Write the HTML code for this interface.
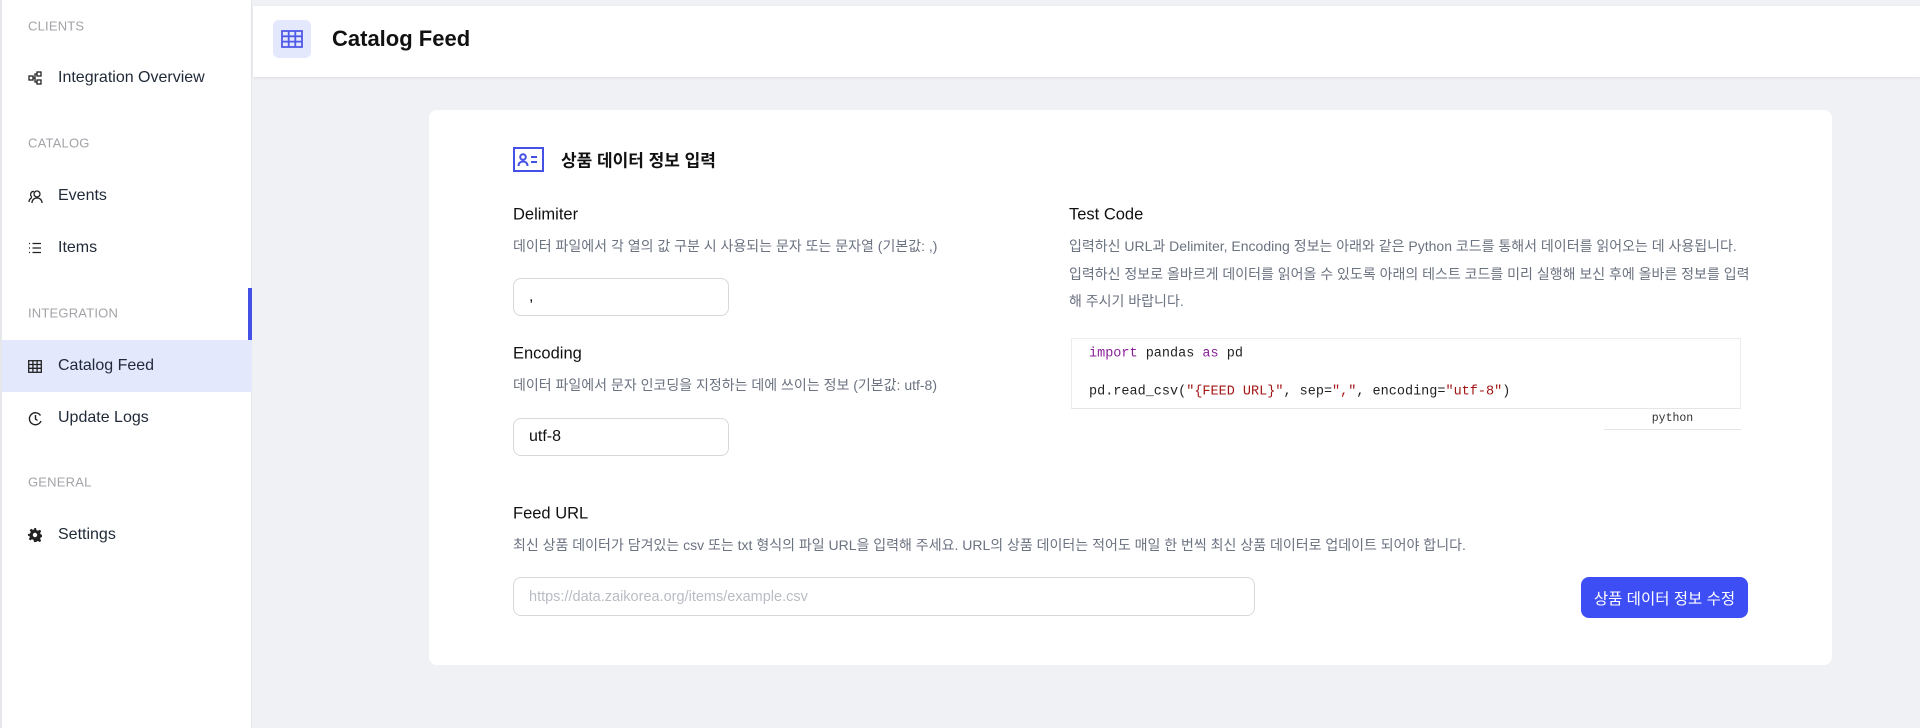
<!DOCTYPE html>
<html><head><meta charset="utf-8">
<style>
*{box-sizing:border-box;margin:0;padding:0}
body{width:1920px;height:728px;overflow:hidden;background:#f0f1f4;font-family:"Liberation Sans","Noto Sans CJK KR",sans-serif;position:relative;color:#111}
.side{position:absolute;left:0;top:0;width:252px;height:728px;background:#fff;border-left:2px solid #e5e7eb;border-right:1px solid #e5e7eb}
.lbl{position:absolute;left:26px;font-size:13px;color:#a3a3a8;letter-spacing:.2px;transform:translateY(-50%)}
.it{position:absolute;left:0;width:250px;height:52px;display:flex;align-items:center;font-size:16px;color:#1f2937}
.it svg{position:absolute;left:26px}
.it span{position:absolute;left:56px}
.act{background:#e3e8fd}
.bar{position:absolute;left:248px;top:288px;width:4px;height:52px;background:#4450e6}
.hdr{position:absolute;left:253px;top:6px;right:0;height:71px;background:#fff;box-shadow:0 1px 3px rgba(0,0,0,.08)}
.hicon{position:absolute;left:20px;top:14px;width:38px;height:38px;border-radius:6px;background:#e3e8fd;display:flex;align-items:center;justify-content:center}
.htitle{position:absolute;left:79px;top:33px;transform:translateY(-50%);font-size:22px;font-weight:700;color:#111}
.card{position:absolute;left:429px;top:110px;width:1403px;height:555px;background:#fff;border-radius:8px}
.t{position:absolute;white-space:nowrap;transform:translateY(-50%)}
.h{font-size:16.5px;color:#111}
.d{font-size:14px;color:#6b7280}
.inp{position:absolute;border:1px solid #d6d8dc;border-radius:8px;background:#fff;font-size:16px;color:#111;display:flex;align-items:center;padding-left:15px}
.code{position:absolute;left:1071px;top:338px;width:670px;height:71px;border:1px solid #ececec;border-bottom:1px solid #e5e5e5;font-family:"Liberation Mono",monospace;font-size:13.5px;color:#222}
.kw{color:#8a1f9a}.st{color:#a31515}
</style></head><body>
<div class="side">
<div class="lbl" style="top:26px">CLIENTS</div>
<div class="it" style="top:52px"><svg width="14" height="14" viewBox="0 0 14 14" fill="none" stroke="#222" stroke-width="1.3"><rect x="1" y="5" width="4" height="4"/><rect x="9" y="1" width="4" height="4"/><rect x="9" y="9" width="4" height="4"/><path d="M5 7h2V3h2M7 7v4h2"/></svg><span>Integration Overview</span></div>
<div class="lbl" style="top:143px">CATALOG</div>
<div class="it" style="top:170px"><svg width="15" height="15" viewBox="0 0 15 15" fill="none" stroke="#222" stroke-width="1.3"><circle cx="9" cy="5" r="3"/><path d="M4 14c0-3 2-5 5-5s5 2 5 5M6 2.5A3 3 0 0 0 4 8M1 13c0-2 1-3.5 3-4.5"/></svg><span>Events</span></div>
<div class="it" style="top:222px"><svg width="14" height="14" viewBox="0 0 14 14" fill="none" stroke="#222" stroke-width="1.3"><path d="M1 2.5h1M1 7h1M1 11.5h1M4.5 2.5H13M4.5 7H13M4.5 11.5H13"/></svg><span>Items</span></div>
<div class="lbl" style="top:313px">INTEGRATION</div>
<div class="it act" style="top:340px"><svg width="14" height="13" viewBox="0 0 14 13" fill="none" stroke="#222" stroke-width="1.3"><rect x=".7" y=".7" width="12.6" height="11.6"/><path d="M.7 4.5h12.6M.7 8.3h12.6M4.9 .7v11.6M9.1 .7v11.6"/></svg><span>Catalog Feed</span></div>
<div class="it" style="top:392px"><svg width="15" height="15" viewBox="0 0 15 15" fill="none" stroke="#222" stroke-width="1.4"><path d="M12.5 4.5A6 6 0 1 0 13 10M7.5 4v4l2 1.5"/></svg><span>Update Logs</span></div>
<div class="lbl" style="top:482px">GENERAL</div>
<div class="it" style="top:509px"><svg width="14" height="14" viewBox="0 0 14 14"><path fill="#222" d="M6 0h2l.4 2 1.6.8 1.8-1.1 1.4 1.4-1.1 1.8.7 1.6 2 .4v2l-2 .4-.7 1.6 1.1 1.8-1.4 1.4-1.8-1.1-1.6.7L8 14H6l-.4-2-1.6-.7-1.8 1.1-1.4-1.4 1.1-1.8L1.2 7.6 0 8V6l2-.4.8-1.6-1.1-1.8 1.4-1.4 1.8 1.1 1.6-.8z"/><circle cx="7" cy="7" r="2.2" fill="#fff"/></svg><span>Settings</span></div>
</div>
<div class="bar"></div>
<div class="hdr">
<div class="hicon"><svg width="22" height="18" viewBox="0 0 22 18" fill="none" stroke="#4f5ae6" stroke-width="1.8"><rect x="1" y="1" width="20" height="16"/><path d="M1 6.3h20M1 11.6h20M7.7 1v16M14.3 1v16"/></svg></div>
<div class="htitle">Catalog Feed</div>
</div>
<div class="card"></div>
<svg style="position:absolute;left:513px;top:147px" width="31" height="25" viewBox="0 0 31 25" fill="none" stroke="#4450e6" stroke-width="2"><rect x="1" y="1" width="29" height="23"/><circle cx="10" cy="10" r="2.8"/><path d="M5.5 19c0-3 2-4.5 4.5-4.5s4.5 1.5 4.5 4.5M18 10h6M18 15h6"/></svg>
<div class="t" style="left:561px;top:159px;font-size:17px;font-weight:700">상품 데이터 정보 입력</div>
<div class="t h" style="left:513px;top:215px">Delimiter</div>
<div class="t d" style="left:513px;top:246px">데이터 파일에서 각 열의 값 구분 시 사용되는 문자 또는 문자열 (기본값: ,)</div>
<div class="inp" style="left:513px;top:278px;width:216px;height:38px">,</div>
<div class="t h" style="left:513px;top:354px">Encoding</div>
<div class="t d" style="left:513px;top:385px">데이터 파일에서 문자 인코딩을 지정하는 데에 쓰이는 정보 (기본값: utf-8)</div>
<div class="inp" style="left:513px;top:418px;width:216px;height:38px">utf-8</div>
<div class="t h" style="left:1069px;top:215px">Test Code</div>
<div class="t d" style="left:1069px;top:246px">입력하신 URL과 Delimiter, Encoding 정보는 아래와 같은 Python 코드를 통해서 데이터를 읽어오는 데 사용됩니다.</div>
<div class="t d" style="left:1069px;top:274px">입력하신 정보로 올바르게 데이터를 읽어올 수 있도록 아래의 테스트 코드를 미리 실행해 보신 후에 올바른 정보를 입력</div>
<div class="t d" style="left:1069px;top:301px">해 주시기 바랍니다.</div>
<div class="code">
<div class="t" style="left:17px;top:15px"><span class="kw">import</span> pandas <span class="kw">as</span> pd</div>
<div class="t" style="left:17px;top:53px">pd.read_csv(<span class="st">"{FEED URL}"</span>, sep=<span class="st">","</span>, encoding=<span class="st">"utf-8"</span>)</div>
</div>
<div style="position:absolute;left:1604px;top:409px;width:137px;height:21px;border-bottom:1px solid #e5e5e5;font-family:'Liberation Mono',monospace;font-size:11.5px;color:#333;text-align:center;line-height:20px">python</div>
<div class="t h" style="left:513px;top:514px">Feed URL</div>
<div class="t d" style="left:513px;top:545px">최신 상품 데이터가 담겨있는 csv 또는 txt 형식의 파일 URL을 입력해 주세요. URL의 상품 데이터는 적어도 매일 한 번씩 최신 상품 데이터로 업데이트 되어야 합니다.</div>
<div class="inp" style="left:513px;top:577px;width:742px;height:39px;color:#b8bcc3;font-size:14.5px">https://data.zaikorea.org/items/example.csv</div>
<div style="position:absolute;left:1581px;top:577px;width:167px;height:41px;border-radius:8px;background:#3d4ef5;color:#fff;font-size:15.5px;display:flex;align-items:center;justify-content:center">상품 데이터 정보 수정</div>
</body></html>
